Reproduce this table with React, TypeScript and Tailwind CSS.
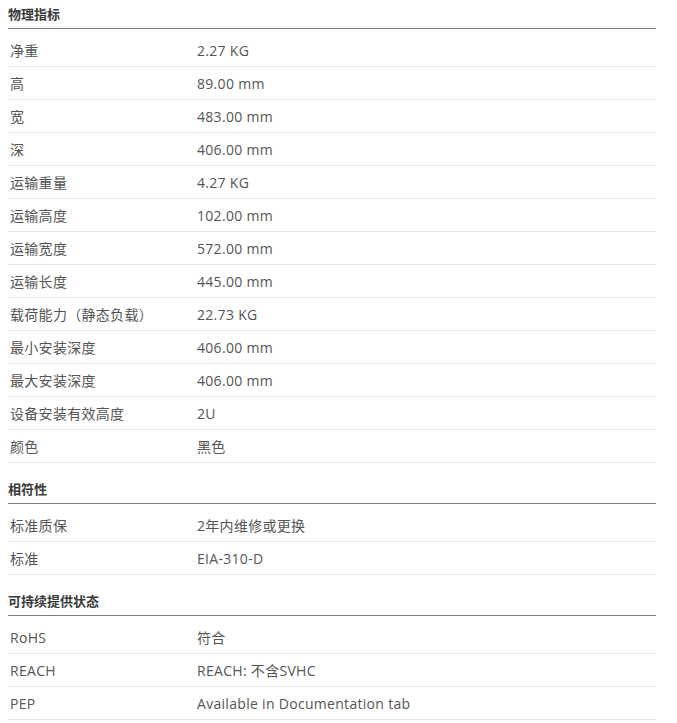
const SECTIONS: { title: string; rows: [string, string][] }[] = [
  {
    title: "物理指标",
    rows: [
      ["净重", "2.27 KG"],
      ["高", "89.00 mm"],
      ["宽", "483.00 mm"],
      ["深", "406.00 mm"],
      ["运输重量", "4.27 KG"],
      ["运输高度", "102.00 mm"],
      ["运输宽度", "572.00 mm"],
      ["运输长度", "445.00 mm"],
      ["载荷能力（静态负载）", "22.73 KG"],
      ["最小安装深度", "406.00 mm"],
      ["最大安装深度", "406.00 mm"],
      ["设备安装有效高度", "2U"],
      ["颜色", "黑色"],
    ],
  },
  {
    title: "相符性",
    rows: [
      ["标准质保", "2年内维修或更换"],
      ["标准", "EIA-310-D"],
    ],
  },
  {
    title: "可持续提供状态",
    rows: [
      ["RoHS", "符合"],
      ["REACH", "REACH: 不含SVHC"],
      ["PEP", "Available in Documentation tab"],
    ],
  },
];

export default function App() {
  return (
    <div className="min-h-screen bg-white font-['Open_Sans','Noto_Sans_CJK_SC',sans-serif]">
      <div className="ml-2 w-[648px]">
        {SECTIONS.map((section, i) => (
          <section key={section.title} className={i === 0 ? "" : "mt-[12px]"}>
            {/* 标题 */}
            <div className="flex h-[29px] items-center border-b border-[#7a7a7a] pt-[2px] text-[13px] font-bold text-[#3a3a3a]">
              {section.title}
            </div>
            <div className="mt-[5px]">
              {section.rows.map(([label, value]) => (
                <div
                  key={label}
                  className="flex h-[33px] items-center border-b border-[#e6e6e6] text-[14px] tracking-[0.3px] text-[#555]"
                >
                  <span className="w-[189px] shrink-0 pl-[2px]">{label}</span>
                  <span>{value}</span>
                </div>
              ))}
            </div>
          </section>
        ))}
      </div>
    </div>
  );
}
